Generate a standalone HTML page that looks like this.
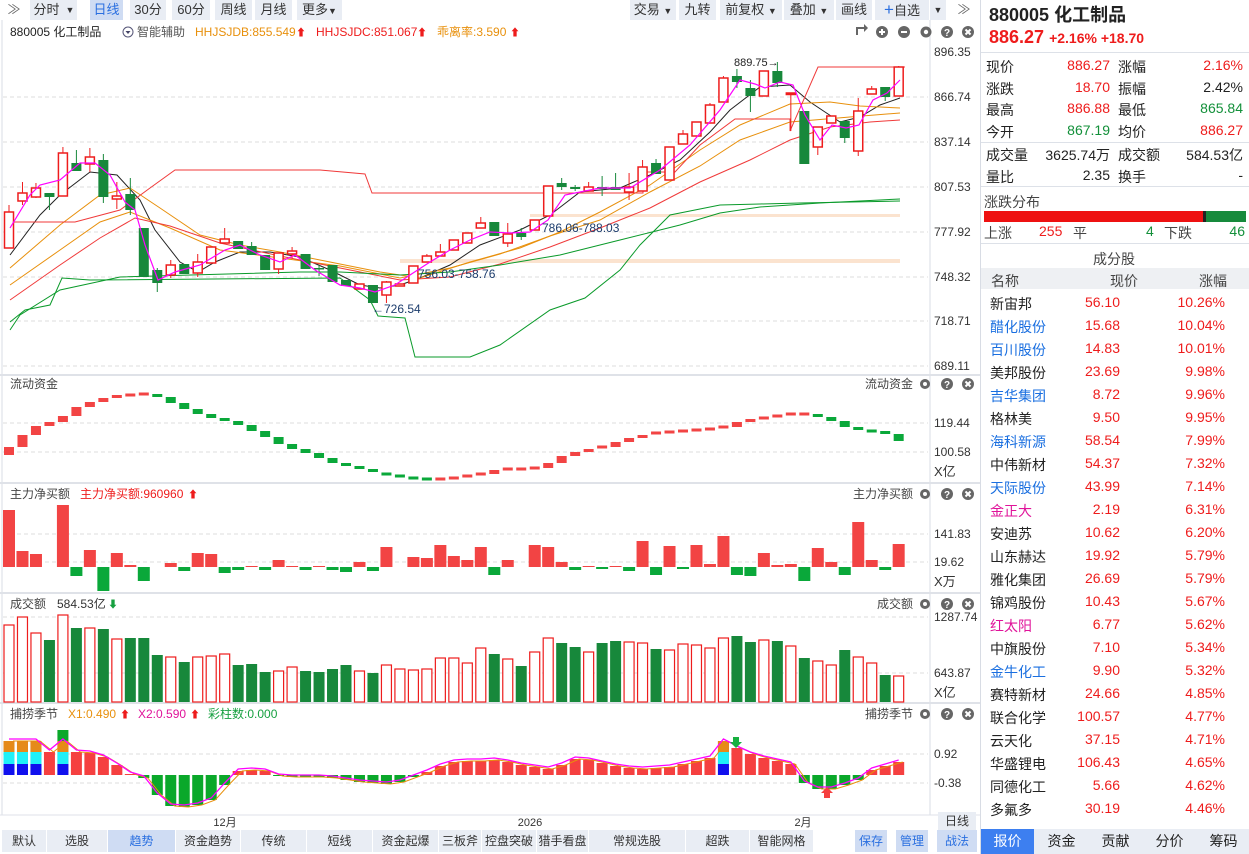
<!DOCTYPE html>
<html><head><meta charset="utf-8">
<style>
*{margin:0;padding:0;box-sizing:border-box}
body{width:1249px;height:854px;overflow:hidden;background:#fff;font-family:"Liberation Sans","Noto Sans CJK SC",sans-serif;position:relative;color:#222}
#chart{position:absolute;left:0;top:0}
.rp{position:absolute;left:980px;top:0;width:269px;height:854px;border-left:1px solid #d8dce4;font-size:14px}
.rp .t{position:absolute;white-space:nowrap}
.r{color:#ee1c1c}.g{color:#13903a}.b{color:#1a6fe0}.m{color:#e0139a}
.tb{position:absolute;font-size:13px;height:20px;line-height:20px;text-align:center;background:#e9edf4;color:#333}
.bt{position:absolute;top:830px;height:22px;line-height:22px;font-size:12px;text-align:center;background:#e9edf4;color:#333}
</style></head><body>
<svg id="chart" width="980" height="854" xmlns="http://www.w3.org/2000/svg" font-family="Liberation Sans, Noto Sans CJK SC, sans-serif"></svg>

<div class="tb" style="left:0;top:0;width:28px;background:#fff;color:#666">≫</div>
<div class="tb" style="left:30px;top:0;width:33px">分时</div>
<div class="tb" style="left:63px;top:0;width:14px;font-size:9px">▼</div>
<div class="tb" style="left:90px;top:0;width:33px;background:#cfdcf3;color:#2a6fe0">日线</div>
<div class="tb" style="left:130px;top:0;width:36px">30分</div>
<div class="tb" style="left:172px;top:0;width:38px">60分</div>
<div class="tb" style="left:215px;top:0;width:37px">周线</div>
<div class="tb" style="left:255px;top:0;width:37px">月线</div>
<div class="tb" style="left:297px;top:0;width:45px">更多<span style="font-size:9px">▼</span></div>
<div class="tb" style="left:630px;top:0;width:46px">交易 <span style="font-size:9px">▼</span></div>
<div class="tb" style="left:679px;top:0;width:37px">九转</div>
<div class="tb" style="left:720px;top:0;width:62px">前复权 <span style="font-size:9px">▼</span></div>
<div class="tb" style="left:784px;top:0;width:50px">叠加 <span style="font-size:9px">▼</span></div>
<div class="tb" style="left:836px;top:0;width:36px">画线</div>
<div class="tb" style="left:875px;top:0;width:54px"><span style="color:#2a6fe0;font-size:17px">+</span>自选</div>
<div class="tb" style="left:930px;top:0;width:16px;font-size:9px">▼</div>
<div class="tb" style="left:950px;top:0;width:28px;background:#fff;color:#666">≫</div>

<div class="bt" style="left:2px;width:44px">默认</div>
<div class="bt" style="left:47px;width:60px">选股</div>
<div class="bt" style="left:108px;width:67px;background:#cfdcf3;color:#2a6fe0">趋势</div>
<div class="bt" style="left:176px;width:64px">资金趋势</div>
<div class="bt" style="left:241px;width:65px">传统</div>
<div class="bt" style="left:307px;width:65px">短线</div>
<div class="bt" style="left:373px;width:65px">资金起爆</div>
<div class="bt" style="left:439px;width:42px">三板斧</div>
<div class="bt" style="left:482px;width:54px">控盘突破</div>
<div class="bt" style="left:537px;width:51px">猎手看盘</div>
<div class="bt" style="left:589px;width:96px">常规选股</div>
<div class="bt" style="left:686px;width:63px">超跌</div>
<div class="bt" style="left:750px;width:63px">智能网格</div>
<div class="bt" style="left:855px;width:32px;background:#cfdcf3;color:#2a6fe0">保存</div>
<div class="bt" style="left:896px;width:32px;background:#cfdcf3;color:#2a6fe0">管理</div>
<div class="bt" style="left:937px;width:40px;background:#cfdcf3;color:#2a6fe0">战法</div>
<div class="bt" style="left:938px;top:812px;width:38px;height:18px;line-height:18px;font-size:12px">日线</div>

<div class="rp">
 <div class="t" style="left:8px;top:1px;font-size:18px;font-weight:bold;color:#222">880005 化工制品</div>
 <div class="t r" style="left:8px;top:27px;font-size:18px;font-weight:bold">886.27 <span style="font-size:14px">+2.16% +18.70</span></div>
 <div style="position:absolute;left:0;top:52px;width:269px;border-top:1px solid #dde1e8"></div>
 <div class="t" style="left:5px;top:57px">现价</div><div class="t r" style="right:139px;top:57px">886.27</div><div class="t" style="left:137px;top:57px">涨幅</div><div class="t r" style="right:6px;top:57px">2.16%</div>
 <div class="t" style="left:5px;top:79px">涨跌</div><div class="t r" style="right:139px;top:79px">18.70</div><div class="t" style="left:137px;top:79px">振幅</div><div class="t" style="right:6px;top:79px">2.42%</div>
 <div class="t" style="left:5px;top:100px">最高</div><div class="t r" style="right:139px;top:100px">886.88</div><div class="t" style="left:137px;top:100px">最低</div><div class="t g" style="right:6px;top:100px">865.84</div>
 <div class="t" style="left:5px;top:122px">今开</div><div class="t g" style="right:139px;top:122px">867.19</div><div class="t" style="left:137px;top:122px">均价</div><div class="t r" style="right:6px;top:122px">886.27</div>
 <div style="position:absolute;left:0;top:142px;width:269px;border-top:1px solid #dde1e8"></div>
 <div class="t" style="left:5px;top:145px">成交量</div><div class="t" style="right:139px;top:145px">3625.74万</div><div class="t" style="left:137px;top:145px">成交额</div><div class="t" style="right:6px;top:145px">584.53亿</div>
 <div class="t" style="left:5px;top:167px">量比</div><div class="t" style="right:139px;top:167px">2.35</div><div class="t" style="left:137px;top:167px">换手</div><div class="t" style="right:6px;top:167px">-</div>
 <div style="position:absolute;left:0;top:186px;width:269px;border-top:1px solid #dde1e8"></div>
 <div class="t" style="left:3px;top:192px;color:#444">涨跌分布</div>
 <div style="position:absolute;left:3px;top:211px;width:219px;height:11px;background:#ee1111"></div>
 <div style="position:absolute;left:222px;top:211px;width:3px;height:11px;background:#222"></div>
 <div style="position:absolute;left:225px;top:211px;width:40px;height:11px;background:#178a3c"></div>
 <div class="t" style="left:3px;top:223px;color:#444">上涨</div><div class="t r" style="left:58px;top:223px">255</div><div class="t" style="left:92px;top:223px;color:#444">平</div><div class="t g" style="left:165px;top:223px">4</div><div class="t" style="left:183px;top:223px;color:#444">下跌</div><div class="t g" style="right:4px;top:223px">46</div>
 <div style="position:absolute;left:0;top:243px;width:269px;border-top:1px solid #dde1e8"></div>
 <div class="t" style="left:112px;top:249px;color:#444">成分股</div>
 <div style="position:absolute;left:0;top:268px;width:269px;height:21px;background:#eef0f3"></div>
 <div class="t" style="left:10px;top:271px;color:#444">名称</div><div class="t" style="left:129px;top:271px;color:#444">现价</div><div class="t" style="left:218px;top:271px;color:#444">涨幅</div>
 <div id="stk"></div>
 <div style="position:absolute;left:0;top:829px;width:269px;height:25px;background:#e9edf4"></div>
 <div class="t" style="left:0;top:829px;width:53px;height:25px;line-height:25px;text-align:center;background:#3d7ff0;color:#fff">报价</div>
 <div class="t" style="left:54px;top:829px;width:53px;line-height:25px;text-align:center">资金</div>
 <div class="t" style="left:108px;top:829px;width:53px;line-height:25px;text-align:center">贡献</div>
 <div class="t" style="left:162px;top:829px;width:53px;line-height:25px;text-align:center">分价</div>
 <div class="t" style="left:216px;top:829px;width:53px;line-height:25px;text-align:center">筹码</div>
</div>

<script>
var stk=[["新宙邦","56.10","10.26%",""],["醋化股份","15.68","10.04%","b"],["百川股份","14.83","10.01%","b"],["美邦股份","23.69","9.98%",""],["吉华集团","8.72","9.96%","b"],["格林美","9.50","9.95%",""],["海科新源","58.54","7.99%","b"],["中伟新材","54.37","7.32%",""],["天际股份","43.99","7.14%","b"],["金正大","2.19","6.31%","m"],["安迪苏","10.62","6.20%",""],["山东赫达","19.92","5.79%",""],["雅化集团","26.69","5.79%",""],["锦鸡股份","10.43","5.67%",""],["红太阳","6.77","5.62%","m"],["中旗股份","7.10","5.34%",""],["金牛化工","9.90","5.32%","b"],["赛特新材","24.66","4.85%",""],["联合化学","100.57","4.77%",""],["云天化","37.15","4.71%",""],["华盛锂电","106.43","4.65%",""],["同德化工","5.66","4.62%",""],["多氟多","30.19","4.46%",""]];
var h="";stk.forEach(function(s,i){var y=294+i*23;h+='<div class="t '+s[3]+'" style="left:9px;top:'+y+'px">'+s[0]+'</div><div class="t r" style="right:129px;top:'+y+'px">'+s[1]+'</div><div class="t r" style="right:24px;top:'+y+'px">'+s[2]+'</div>';});
document.getElementById("stk").innerHTML=h;

var S=document.getElementById("chart"),o="";
function X(i){return 9+i*13.48}
var R="#ee1c1c",G="#17883b",GL="#0aa83a",RL="#f24444";
function txt(x,y,t,c,s,a){o+='<text x="'+x+'" y="'+y+'" fill="'+(c||"#333")+'" font-size="'+(s||12)+'"'+(a?' text-anchor="'+a+'"':'')+'>'+t+'</text>';}
function line(x1,y1,x2,y2,c,w,d){o+='<line x1="'+x1+'" y1="'+y1+'" x2="'+x2+'" y2="'+y2+'" stroke="'+c+'" stroke-width="'+(w||1)+'"'+(d?' stroke-dasharray="'+d+'"':'')+'/>';}
function poly(p,c,w){o+='<polyline fill="none" stroke="'+c+'" stroke-width="'+(w||1)+'" points="'+p.map(function(q){return q.join(",")}).join(" ")+'"/>';}
line(930,20,930,815,"#d8dce4");line(2,20,2,815,"#d8dce4");
[375,483,593,703].forEach(function(y){line(0,y,980,y,"#dfe2e8",2)});
line(0,815,980,815,"#dfe2e8");
var gl=[[52,"896.35"],[97,"866.74"],[142,"837.14"],[187,"807.53"],[232,"777.92"],[277,"748.32"],[321,"718.71"],[366,"689.11"]];
gl.forEach(function(g){line(3,g[0],928,g[0],"#dcdcdc",1,"4,3");txt(934,g[0]+4,g[1],"#333",12);});
line(3,52,928,52,"#fff");
txt(10,36,"880005 化工制品","#222",12);
o+='<circle cx="128" cy="32" r="5" fill="none" stroke="#557"/><path d="M125.5 31 L128 34 L130.5 31Z" fill="#446"/>';
txt(137,36,"智能辅助","#555",12);
txt(195,36,"HHJSJDB:855.549","#e8900c",12);txt(296,36,"⬆","#ee1c1c",10);
txt(316,36,"HHJSJDC:851.067","#ee1c1c",12);txt(417,36,"⬆","#ee1c1c",10);
txt(437,36,"乖离率:3.590","#e8900c",12);txt(510,36,"⬆","#ee1c1c",10);
o+='<g fill="#666"><path d="M856 27 h8 v-3 l4 4 -4 4 v-3 h-6 v6 h-2z"/><circle cx="882" cy="32" r="6"/><circle cx="904" cy="32" r="6"/><circle cx="926" cy="32" r="5.5"/><circle cx="947" cy="32" r="6"/><circle cx="968" cy="32" r="6"/></g>';
o+='<g stroke="#fff" stroke-width="2"><line x1="879" y1="32" x2="885" y2="32"/><line x1="882" y1="29" x2="882" y2="35"/><line x1="901" y1="32" x2="907" y2="32"/><line x1="965.5" y1="29.5" x2="970.5" y2="34.5"/><line x1="970.5" y1="29.5" x2="965.5" y2="34.5"/></g><circle cx="926" cy="32" r="2.2" fill="#fff"/><text x="947" y="36" fill="#fff" font-size="10" font-weight="bold" text-anchor="middle">?</text>';
o+='<rect x="530" y="214" width="370" height="3" fill="#fbe3cf"/><rect x="400" y="259" width="500" height="4" fill="#fbe3cf"/>';
var C=[["R",212,248,205,248],["R",193,201,182,205],["R",188,197,183,198],["G",193,197,193,210],["R",153,196,147,196],["G",163,171,150,171],["R",157,164,148,172],["G",160,197,154,203],["R",196,199,182,209],["G",194,210,178,215],["G",228,277,228,277],["G",270,283,268,292],["R",265,275,260,278],["G",264,274,264,274],["R",262,273,254,277],["R",247,263,247,263],["R",239,243,228,243],["G",241,249,241,249],["G",246,255,242,255],["G",255,270,255,270],["R",253,269,253,274],["R",251,254,247,258],["G",254,269,254,269],["G",268,269,265,276],["G",265,282,265,282],["G",280,286,280,286],["R",284,289,284,289],["G",285,303,285,303],["R",282,295,281,303],["R",284,286,284,286],["R",266,283,266,283],["R",256,262,254,262],["R",252,256,244,256],["R",240,250,240,250],["R",233,243,233,243],["R",223,228,217,228],["G",222,236,222,236],["R",234,243,223,247],["G",233,237,228,240],["R",220,230,220,230],["R",186,216,186,216],["G",183,187,178,190],["G",187,189,185,191],["R",187,191,182,191],["G",187,189,176,196],["G",187,190,173,190],["R",187,192,173,200],["R",167,191,160,191],["G",163,174,159,174],["R",147,180,147,180],["R",134,144,130,144],["R",122,136,122,136],["R",105,123,103,123],["R",78,102,76,102],["G",76,82,69,88],["G",88,96,80,112],["R",71,96,71,96],["G",71,83,62,87],["R",93,94,93,131],["G",111,164,111,164],["R",127,147,127,155],["R",116,123,116,123],["G",121,138,121,143],["R",111,151,98,156],["R",89,94,86,94],["G",87,97,87,101],["R",67,96,66,96]];
poly([[10,255],[40,215],[60,195],[90,172],[117,175],[140,200],[155,230],[180,262],[198,272],[215,262],[240,252],[270,252],[300,257],[330,270],[360,285],[380,288],[400,285],[420,278],[450,265],[480,245],[520,230],[550,215],[580,192],[620,188],[650,175],[680,160],[710,132],[730,110],[760,87],[790,85],[810,102],[840,122],[860,117],[880,105],[900,98]],"#222");
poly([[10,268],[60,225],[100,195],[130,188],[160,208],[200,235],[240,245],[280,252],[330,262],[380,272],[420,278],[470,262],[520,248],[560,232],[600,212],[650,185],[700,150],[740,125],[790,104],[830,102],[860,106],[900,108]],"#e8900c");
poly([[10,285],[60,250],[100,222],[130,212],[170,228],[220,250],[280,258],[340,266],[400,278],[450,268],[500,254],[550,236],[600,220],[650,192],[700,166],[740,140],[790,122],[850,117],[900,113]],"#e8900c");
poly([[10,300],[60,265],[100,238],[135,218],[170,226],[220,243],[280,256],[340,268],[400,280],[450,277],[500,264],[550,247],[600,228],[650,208],[700,182],[750,160],[790,140],[830,127],[870,122],[900,120]],"#f03a3a");
poly([[10,222],[75,222],[120,210],[150,188],[175,170],[320,170],[365,174],[372,193],[643,193],[643,172],[675,172],[700,145],[735,119],[790,119],[790,131],[818,67],[905,67]],"#f03a3a");
poly([[10,330],[20,315],[60,290],[120,277],[300,272],[340,272],[400,275],[450,272],[500,265],[560,255],[620,240],[680,225],[720,213],[760,207],[820,203],[900,199]],"#0a9a2a");
poly([[10,322],[25,310],[50,305],[62,278],[90,280],[340,278],[370,300],[378,316],[405,318],[415,357],[470,357],[500,345],[550,310],[585,298],[620,270],[640,245],[670,215],[720,205],[760,204],[800,203],[900,201]],"#0a9a2a");
var mag=[[10,228],[30,195],[40,185],[60,180],[80,163],[95,163],[110,175],[125,202],[135,210],[145,245],[158,280],[175,272],[200,265],[225,250],[240,245],[260,255],[280,262],[295,255],[315,270],[340,285],[360,288],[375,292],[395,285],[410,275],[430,262],[450,250],[470,240],[490,232],[510,233],[530,232],[548,220],[565,195],[600,188],[630,188],[660,170],[690,145],[720,110],[740,80],[755,84],[765,88],[780,82],[793,85],[805,115],[820,140],[832,125],[846,128],[859,125],[873,100],[887,93],[900,80]];
C.forEach(function(c,i){var x=X(i),col=c[0]=="R"?R:G;line(x,c[3],x,c[4],col,1);
 var hgt=Math.max(1.5,c[2]-c[1]);
 if(c[0]=="R")o+='<rect x="'+(x-4.5)+'" y="'+c[1]+'" width="9" height="'+hgt+'" fill="#fff" stroke="'+R+'" stroke-width="1.5"/>';
 else o+='<rect x="'+(x-5)+'" y="'+c[1]+'" width="10" height="'+hgt+'" fill="'+G+'"/>';});
poly(mag,"#f0f","1.2");
txt(734,66,"889.75→","#222",11);txt(542,232,"786.06-788.03","#1c3c6c",12);txt(418,278,"756.03-758.76","#1c3c6c",12);txt(372,313,"←726.54","#1c3c6c",12);
function ptitle(y,t){txt(10,y,t,"#444",12);txt(913,y,t,"#444",12,"end");
 o+='<g fill="#666"><circle cx="925" cy="'+(y-4)+'" r="5"/><circle cx="947" cy="'+(y-4)+'" r="6"/><circle cx="968" cy="'+(y-4)+'" r="6"/></g><circle cx="925" cy="'+(y-4)+'" r="2" fill="#fff"/><text x="947" y="'+y+'" fill="#fff" font-size="10" font-weight="bold" text-anchor="middle">?</text><g stroke="#fff" stroke-width="2"><line x1="965.5" y1="'+(y-6.5)+'" x2="970.5" y2="'+(y-1.5)+'"/><line x1="970.5" y1="'+(y-6.5)+'" x2="965.5" y2="'+(y-1.5)+'"/></g>';}
ptitle(388,"流动资金");ptitle(498,"主力净买额");ptitle(608,"成交额");ptitle(718,"捕捞季节");
txt(80,498,"主力净买额:960960","#ee1c1c",12);txt(188,498,"⬆","#ee1c1c",10);
txt(57,608,"584.53亿","#333",12);txt(108,608,"⬇","#17a040",10);
txt(68,718,"X1:0.490","#e8900c",12);txt(120,718,"⬆","#ee1c1c",10);
txt(138,718,"X2:0.590","#e0139a",12);txt(190,718,"⬆","#ee1c1c",10);
txt(208,718,"彩柱数:0.000","#17a040",12);
[[423,"119.44"],[452,"100.58"]].forEach(function(g){line(3,g[0],928,g[0],"#dcdcdc",1,"4,3");txt(934,g[0]+4,g[1]);});txt(934,476,"X亿","#333",13);
var L=[447,435,426,422,416,407,402,398,395,395,394,397,403,409,414,418,421,425,431,437,444,449,453,458,463,466,469,472,474,476,478,479,479,478,476,474,470,469,469,468,463,456,452,449,447,442,438,435,433,432,431,430,429,427,422,419,418,416,414,414,417,421,427,430,431,434,441];
L.forEach(function(v,i){var p=i?L[i-1]:v+8,t=Math.min(p,v),b=Math.max(p,v);if(b-t<3){t=v-1.5;b=v+1.5;}o+='<rect x="'+(X(i)-5)+'" y="'+t+'" width="10" height="'+(b-t)+'" fill="'+(v<=p?RL:GL)+'"/>';});
[[534,"141.83"],[562,"19.62"]].forEach(function(g){line(3,g[0],928,g[0],"#dcdcdc",1,"4,3");txt(934,g[0]+4,g[1]);});txt(934,586,"X万","#333",13);
var N=[57,16,13,0,62,-9,17,-24,14,2,-14,0,4,-4,14,13,-6,-3,1,-3,7,1,-3,1,-3,-5,5,-4,20,0,10,9,22,11,7,20,-8,7,0,22,20,5,-3,1,-2,1,-4,26,-8,21,-2,22,3,31,-8,-9,14,2,3,-14,19,5,-8,45,7,-3,23];
N.forEach(function(v,i){if(!v)return;var y=v>0?567-v:567;o+='<rect x="'+(X(i)-6)+'" y="'+y+'" width="12" height="'+Math.abs(v)+'" fill="'+(v>0?RL:GL)+'"/>';});
[[617,"1287.74"],[673,"643.87"]].forEach(function(g){line(3,g[0],928,g[0],"#dcdcdc",1,"4,3");txt(934,g[0]+4,g[1]);});txt(934,697,"X亿","#333",13);
var V=[625,617,633,640,615,628,628,629,639,638,638,655,657,662,657,656,654,665,664,672,671,667,671,672,669,665,671,673,665,669,670,669,658,658,663,648,654,659,666,652,638,643,647,652,643,641,642,643,649,650,644,645,648,638,636,642,640,641,646,658,661,665,650,657,663,675,676];
V.forEach(function(v,i){var c=C[i]?C[i][0]:"R";if(c=="R")o+='<rect x="'+(X(i)-5)+'" y="'+v+'" width="10" height="'+(702-v)+'" fill="#fff" stroke="'+R+'" stroke-width="1.2"/>';else o+='<rect x="'+(X(i)-5.5)+'" y="'+v+'" width="11" height="'+(702-v)+'" fill="'+G+'"/>';});
[[754,"0.92"],[783,"-0.38"]].forEach(function(g){line(3,g[0],928,g[0],"#dcdcdc",1,"4,3");txt(934,g[0]+4,g[1]);});
var B=[34,34,34,23,34,23,22,18,10,1,-3,-20,-31,-32,-30,-25,-10,4,5,4,-1,-2,-2,-2,-3,-5,-7,-8,-9,-7,-2,3,9,13,14,14,15,13,10,8,6,10,16,15,12,9,7,6,7,8,11,14,17,34,27,21,17,14,11,-8,-14,-14,-10,-5,5,9,13];
var Z=775,ln1=[],ln2=[];
B.forEach(function(v,i){var x=X(i)-5.5;
 if(v>0){o+='<rect x="'+x+'" y="'+(Z-v)+'" width="11" height="'+v+'" fill="#f54040"/>';}else if(v<0){o+='<rect x="'+x+'" y="'+Z+'" width="11" height="'+(-v)+'" fill="#0aa82a"/>';}
 if(i<3||i==4||i==53){o+='<rect x="'+x+'" y="'+(Z-11)+'" width="11" height="11" fill="#1010ee"/><rect x="'+x+'" y="'+(Z-23)+'" width="11" height="12" fill="#20f0f8"/><rect x="'+x+'" y="'+(Z-34)+'" width="11" height="11" fill="#e58a1a"/>';}
 if(i==4)o+='<rect x="'+x+'" y="'+(Z-45)+'" width="11" height="11" fill="#0aa82a"/>';
 ln1.push([X(i),Z-v-2]);ln2.push([X(i)+4,Z-v]);});
poly(ln2,"#e8900c");poly(ln1,"#f0f","1.3");
o+='<path d="M733 737 h6 v5 h3 l-6 6 -6 -6 h3z" fill="#17b040"/><path d="M830 798 h-6 v-5 h-3 l6 -6 6 6 h-3z" fill="#f54040"/>';
txt(225,826,"12月","#333",11,"middle");txt(530,826,"2026","#333",11,"middle");txt(803,826,"2月","#333",11,"middle");
S.innerHTML=o;
</script>
</body></html>
